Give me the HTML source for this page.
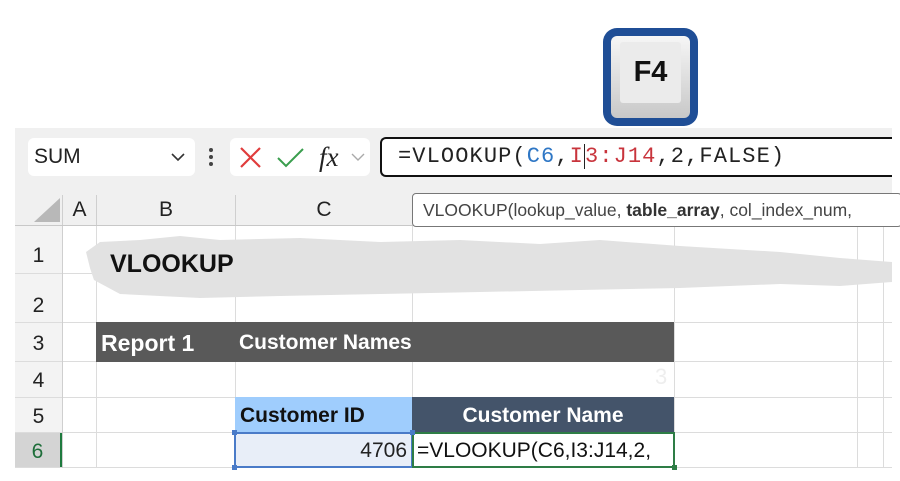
<!DOCTYPE html>
<html><head><meta charset="utf-8"><style>
*{margin:0;padding:0;box-sizing:border-box}
body{width:900px;height:481px;background:#fff;position:relative;overflow:hidden;font-family:"Liberation Sans",sans-serif}
.a{position:absolute}
.cal{font-family:"Liberation Sans Narrow","Liberation Sans",sans-serif}
.vl{position:absolute;width:1px;background:#dcdcdc}
.hl{position:absolute;height:1px;background:#dcdcdc}
.rh{position:absolute;left:15px;width:47px;text-align:center;font-size:21px;color:#222;background:#f3f3f3}
</style></head><body>
<!-- F4 key -->
<div class="a" style="left:603px;top:28px;width:95px;height:98px;background:#1f4e96;border-radius:14px"></div>
<div class="a" style="left:611px;top:36px;width:79px;height:82px;background:linear-gradient(#f6f6f6,#c8c8c8);border-radius:6px"></div>
<div class="a" style="left:620px;top:42px;width:61px;height:61px;background:#ebebeb;border-radius:3px;text-align:center;font-weight:bold;font-size:29px;line-height:60px;color:#111">F4</div>

<!-- grey frame -->
<div class="a" style="left:15px;top:128px;width:877px;height:340px;background:#f0f0f0"></div>
<!-- name box -->
<div class="a" style="left:28px;top:138px;width:167px;height:38px;background:#fff;border-radius:6px;font-size:21px;line-height:38px;padding-left:6px;color:#222">SUM</div>
<svg class="a" style="left:170px;top:150px" width="16" height="14"><path d="M2 4 L8 10 L14 4" stroke="#333" stroke-width="1.6" fill="none"/></svg>
<div class="a" style="left:209px;top:148px;width:4px;height:4px;background:#444;border-radius:2px"></div>
<div class="a" style="left:209px;top:155px;width:4px;height:4px;background:#444;border-radius:2px"></div>
<div class="a" style="left:209px;top:162px;width:4px;height:4px;background:#444;border-radius:2px"></div>
<div class="a" style="left:230px;top:138px;width:140px;height:38px;background:#fff;border-radius:6px"></div>
<svg class="a" style="left:238px;top:145px" width="26" height="26"><path d="M3 3 L22 22 M22 3 L3 22" stroke="#e03c3c" stroke-width="2.2"/></svg>
<svg class="a" style="left:276px;top:145px" width="30" height="26"><path d="M2 13 L10 21 L27 4" stroke="#3a9e4e" stroke-width="2" fill="none"/></svg>
<div class="a" style="left:319px;top:142px;font-family:'Liberation Serif',serif;font-style:italic;font-size:27px;line-height:30px;color:#222">fx</div>
<svg class="a" style="left:350px;top:151px" width="16" height="12"><path d="M2 3 L8 9 L14 3" stroke="#aaa" stroke-width="1.4" fill="none"/></svg>
<!-- formula input -->
<div class="a" style="left:380px;top:137px;width:520px;height:40px;background:#fff;border:2px solid #111;border-right:none;border-radius:6px 0 0 6px;font-family:'Liberation Mono',monospace;font-size:22px;line-height:36px;padding-left:16px;color:#222;letter-spacing:1.1px;white-space:nowrap">=VLOOKUP(<span style="color:#2f77c5">C6</span>,<span style="color:#c8343c">I<span style="border-left:1px solid #222"></span>3:J14</span>,2,FALSE)</div>
<div class="a" style="left:892px;top:128px;width:8px;height:353px;background:#fff"></div>

<!-- column header row -->
<svg class="a" style="left:30px;top:196px" width="32" height="28"><path d="M30 2 L30 26 L4 26 Z" fill="#b8b8b8"/></svg>
<div class="a" style="left:62px;top:195px;width:34px;height:30px;text-align:center;font-size:21px;line-height:30px;color:#222;border-left:1px solid #cfcfcf">A</div>
<div class="a" style="left:96px;top:195px;width:139px;height:30px;text-align:center;font-size:21px;line-height:30px;color:#222;border-left:1px solid #cfcfcf">B</div>
<div class="a" style="left:235px;top:195px;width:177px;height:30px;text-align:center;font-size:21px;line-height:30px;color:#222;border-left:1px solid #cfcfcf">C</div>
<div class="a" style="left:15px;top:225px;width:877px;height:1px;background:#c8c8c8"></div>

<!-- cells area -->
<div class="a" style="left:62px;top:226px;width:830px;height:242px;background:#fff"></div>
<div class="vl" style="left:96px;top:226px;height:242px"></div>
<div class="vl" style="left:235px;top:226px;height:242px"></div>
<div class="vl" style="left:412px;top:226px;height:242px"></div>
<div class="vl" style="left:674px;top:226px;height:242px"></div>
<div class="vl" style="left:857px;top:226px;height:242px"></div>
<div class="vl" style="left:883px;top:226px;height:242px"></div>
<div class="hl" style="left:15px;top:273px;width:877px"></div>
<div class="hl" style="left:15px;top:322px;width:877px"></div>
<div class="hl" style="left:15px;top:361px;width:877px"></div>
<div class="hl" style="left:15px;top:397px;width:877px"></div>
<div class="hl" style="left:15px;top:432px;width:877px"></div>
<div class="hl" style="left:15px;top:467px;width:877px"></div>

<!-- row headers -->
<div class="rh" style="top:226px;height:47px;line-height:60px">1</div>
<div class="rh" style="top:274px;height:48px;line-height:64px">2</div>
<div class="rh" style="top:323px;height:38px;line-height:42px">3</div>
<div class="rh" style="top:362px;height:35px;line-height:38px">4</div>
<div class="rh" style="top:398px;height:34px;line-height:38px">5</div>
<div class="rh" style="top:433px;height:34px;line-height:38px;background:#d4d4d4;color:#1e6e3a;border-right:2px solid #1e7a3e">6</div>
<div class="a" style="left:62px;top:226px;width:1px;height:242px;background:#cfcfcf"></div>

<!-- brush stroke -->
<svg class="a" style="left:80px;top:228px" width="812" height="72"><path d="M6 24 L20 14 L60 12 L100 8 L140 12 L220 10 L300 14 L380 12 L460 16 L520 12 L600 18 L700 24 L760 30 L812 34 L812 54 L760 58 L700 56 L600 60 L500 62 L400 64 L300 66 L200 68 L120 70 L40 66 L14 52 L10 40 Z" fill="#e2e2e2"/></svg>
<!-- tooltip -->
<div class="a" style="left:412px;top:193px;width:490px;height:34px;background:#fff;border:1px solid #777;border-radius:4px;font-size:17.5px;line-height:32px;padding-left:10px;color:#444;white-space:nowrap">VLOOKUP(lookup_value, <b style="color:#333">table_array</b>, col_index_num,</div>
<div class="a" style="left:110px;top:250px;font-weight:bold;font-size:25px;color:#111">VLOOKUP</div>

<!-- row 3 -->
<div class="a cal" style="left:96px;top:322px;width:578px;height:40px;background:#595959;color:#fff;font-weight:bold;font-size:23px;line-height:42px"><span style="padding-left:5px">Report 1</span><span style="position:absolute;left:143px;font-size:21px">Customer Names</span></div>
<div class="a cal" style="left:655px;top:364px;font-size:22px;color:#eee">3</div>
<!-- row 5 -->
<div class="a cal" style="left:235px;top:397px;width:177px;height:35px;background:#9fcdfd;font-weight:bold;font-size:21px;line-height:38px;padding-left:5px;color:#111">Customer ID</div>
<div class="a cal" style="left:412px;top:397px;width:262px;height:35px;background:#44546a;font-weight:bold;font-size:21px;line-height:38px;text-align:center;color:#fff">Customer Name</div>
<!-- row 6 -->
<div class="a cal" style="left:234px;top:432px;width:179px;height:36px;background:#e8eef8;border:2px solid #4a7bc8;font-size:21px;line-height:34px;text-align:right;padding-right:4px;color:#222">4706</div>
<div class="a cal" style="left:412px;top:432px;width:263px;height:36px;background:#fff;border:2px solid #2e7d46;font-size:21px;line-height:34px;padding-left:3px;color:#111;white-space:nowrap;overflow:hidden">=VLOOKUP(C6,I3:J14,2,</div>
<div class="a" style="left:232px;top:430px;width:5px;height:5px;background:#4a7bc8"></div>
<div class="a" style="left:410px;top:430px;width:5px;height:5px;background:#4a7bc8"></div>
<div class="a" style="left:232px;top:465px;width:5px;height:5px;background:#4a7bc8"></div>
<div class="a" style="left:672px;top:465px;width:5px;height:5px;background:#2e7d46"></div>
</body></html>
